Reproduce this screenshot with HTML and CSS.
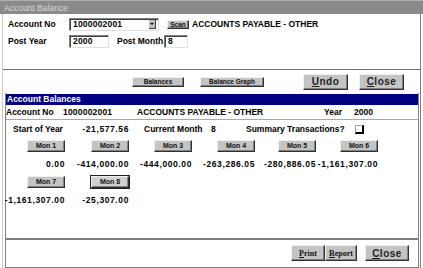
FILE: index.html
```html
<!DOCTYPE html>
<html lang="en">

<head>
    <meta charset="UTF-8">
    <title>Account Balance</title>
    <link rel="stylesheet" href="styles.css">
</head>

<body>
    <div class="titlebar">Account Balance</div>
    <div class="frame">
        <div class="header">
            <div class="row">
                <span class="label">Account No</span>
                <div class="field combo">1000002001<span class="drop"></span></div>
                <button class="btn small scan">Scan</button>
                <span class="acct-name">ACCOUNTS PAYABLE - OTHER</span>
            </div>
            <div class="row">
                <span class="label">Post Year</span>
                <div class="field year">2000</div>
                <span class="label month-label">Post Month</span>
                <div class="field month">8</div>
            </div>
        </div>

        <div class="toolbar">
            <button class="btn small balances">Balances</button>
            <button class="btn small graph">Balance Graph</button>
            <button class="btn big undo"><u>U</u>ndo</button>
            <button class="btn big close"><u>C</u>lose</button>
        </div>

        <div class="panel">
            <div class="panel-title">Account Balances</div>
            <div class="info-row">
                <span class="w-acc">Account No</span>
                <span class="w-num">1000002001</span>
                <span class="w-name">ACCOUNTS PAYABLE - OTHER</span>
                <span class="w-year">Year</span>
                <span>2000</span>
            </div>
            <div class="start-row">
                <span class="w-start">Start of Year</span>
                <span class="num w-startval">-21,577.56</span>
                <span class="w-cur">Current Month</span>
                <span class="w-curval">8</span>
                <span>Summary Transactions?</span>
                <span class="check"></span>
            </div>

            <div class="months">
                <div class="cell"><button class="btn small mon">Mon 1</button><span class="num">0.00</span></div>
                <div class="cell"><button class="btn small mon">Mon 2</button><span class="num">-414,000.00</span></div>
                <div class="cell"><button class="btn small mon">Mon 3</button><span class="num">-444,000.00</span></div>
                <div class="cell"><button class="btn small mon">Mon 4</button><span class="num">-263,286.05</span></div>
                <div class="cell"><button class="btn small mon">Mon 5</button><span class="num">-280,886.05</span></div>
                <div class="cell"><button class="btn small mon">Mon 6</button><span class="num">-1,161,307.00</span></div>
                <div class="cell"><button class="btn small mon">Mon 7</button><span class="num">-1,161,307.00</span></div>
                <div class="cell"><button class="btn small mon current">Mon 8</button><span class="num">-25,307.00</span></div>
            </div>

            <div class="spacer"></div>

            <div class="footer">
                <button class="btn serif print"><u>P</u>rint</button>
                <button class="btn serif report"><u>R</u>eport</button>
                <button class="btn big close2"><u>C</u>lose</button>
            </div>
        </div>
    </div>
</body>

</html>
```

FILE: styles.css
```css
body {
    margin: 0;
    width: 423px;
    height: 268px;
    overflow: hidden;
    background-color: #ffffff;
    font-family: "Liberation Sans", Arial, sans-serif;
    font-size: 8.5px;
    font-weight: bold;
    color: #000000;
}

.titlebar {
    height: 14px;
    line-height: 14px;
    padding-left: 4px;
    background-color: #8a8a8a;
    border-top: 1px solid #b0b0b0;
    box-sizing: border-box;
    color: #d8d8d8;
    font-weight: normal;
    font-size: 8.5px;
}

.frame {
    margin: 0 2px;
    height: 254px;
    border-left: 1px solid #c8c8c8;
    border-right: 1px solid #808080;
    display: flex;
    flex-direction: column;
}

.header {
    height: 52px;
    padding: 3px 0 0 5px;
    border-bottom: 1px solid #707070;
}

.row {
    display: flex;
    align-items: center;
    height: 14px;
    margin-bottom: 3px;
}

.label {
    width: 61px;
}

.month-label {
    width: 47px;
    margin-left: 8px;
}

.field {
    height: 13px;
    box-sizing: border-box;
    border: 1px solid;
    border-color: #808080 #e0e0e0 #e0e0e0 #808080;
    box-shadow: inset 1px 1px 0 #404040;
    background-color: #ffffff;
    padding-left: 3px;
    line-height: 11px;
    font-size: 8.5px;
    letter-spacing: 0.2px;
    display: flex;
    align-items: center;
}

.combo {
    width: 90px;
    position: relative;
}

.drop {
    position: absolute;
    right: 2px;
    top: 1px;
    width: 6px;
    height: 8px;
    background-color: #c0c0c0;
    border-right: 1px solid #404040;
    border-bottom: 1px solid #404040;
}

.drop::after {
    content: "";
    position: absolute;
    left: 1px;
    top: 3px;
    border-left: 2px solid transparent;
    border-right: 2px solid transparent;
    border-top: 2px solid #000000;
}

.year {
    width: 40px;
}

.month {
    width: 24px;
}

.acct-name {
    margin-left: 3px;
}

.btn {
    background-color: #c4c4c4;
    border: 1px solid;
    border-color: #f0f0f0 #303030 #303030 #f0f0f0;
    box-shadow: inset -1px -1px 0 #808080;
    padding: 0;
    font-family: "Liberation Sans", Arial, sans-serif;
    font-weight: bold;
    color: #111111;
    cursor: pointer;
}

.small {
    height: 10px;
    font-size: 6.5px;
    line-height: 8px;
}

.big {
    width: 45px;
    height: 16px;
    font-size: 10px;
    letter-spacing: 0.5px;
    color: #222222;
}

.serif {
    height: 16px;
    font-family: "Liberation Serif", "Times New Roman", serif;
    font-size: 8px;
}

.scan {
    width: 22px;
    height: 9px;
    margin-left: 8px;
}

.toolbar {
    height: 23px;
    display: flex;
    align-items: center;
}

.balances {
    width: 52px;
    margin-left: 129px;
}

.graph {
    width: 64px;
    margin-left: 16px;
}

.undo {
    margin-left: 39px;
}

.close {
    margin-left: 11px;
}

.panel {
    flex: 1;
    margin: 0 1px 0 2px;
    padding-top: 1px;
    border-left: 1px solid #808080;
    border-right: 1px solid #808080;
    border-bottom: 1px solid #808080;
    display: flex;
    flex-direction: column;
}

.panel-title {
    height: 11px;
    line-height: 11px;
    padding-left: 1px;
    background-color: #000080;
    color: #ffffff;
}

.info-row {
    height: 14px;
    display: flex;
    align-items: center;
    border-bottom: 1px solid #a8a8a8;
}

.w-acc {
    width: 57px;
}

.w-num {
    width: 74px;
    letter-spacing: 0.2px;
}

.w-name {
    width: 187px;
}

.w-year {
    width: 30px;
}

.start-row {
    height: 18px;
    display: flex;
    align-items: center;
    padding-left: 7px;
}

.w-start {
    width: 68px;
}

.w-startval {
    width: 48px;
    text-align: right;
}

.w-cur {
    width: 67px;
    margin-left: 15px;
}

.w-curval {
    width: 35px;
}

.check {
    width: 6px;
    height: 6px;
    margin-left: 10px;
    border: 1px solid #a0a0a0;
    border-right: 2px solid #000000;
    border-bottom: 2px solid #000000;
    background-color: #ffffff;
}

.num {
    letter-spacing: 0.6px;
}

.months {
    margin-top: 2px;
    display: grid;
    grid-template-columns: 59px 64px 63px 63px 61px 62px;
    grid-auto-rows: 36px;
}

.cell {
    display: flex;
    flex-direction: column;
    align-items: flex-end;
}

.cell .num {
    height: 12px;
    line-height: 12px;
    margin-top: 6px;
    white-space: nowrap;
}

.mon {
    width: 38px;
    height: 12px;
    font-size: 7px;
}

.mon.current {
    outline: 1px solid #202020;
    background-color: #d0d0d0;
}

.spacer {
    flex: 1;
}

.footer {
    height: 29px;
    border-top: 2px solid #808080;
    padding-top: 5px;
    padding-right: 9px;
    box-sizing: border-box;
    display: flex;
    justify-content: flex-end;
    align-items: flex-start;
}

.print {
    width: 34px;
}

.report {
    width: 32px;
}

.close2 {
    width: 44px;
    margin-left: 8px;
}
```
